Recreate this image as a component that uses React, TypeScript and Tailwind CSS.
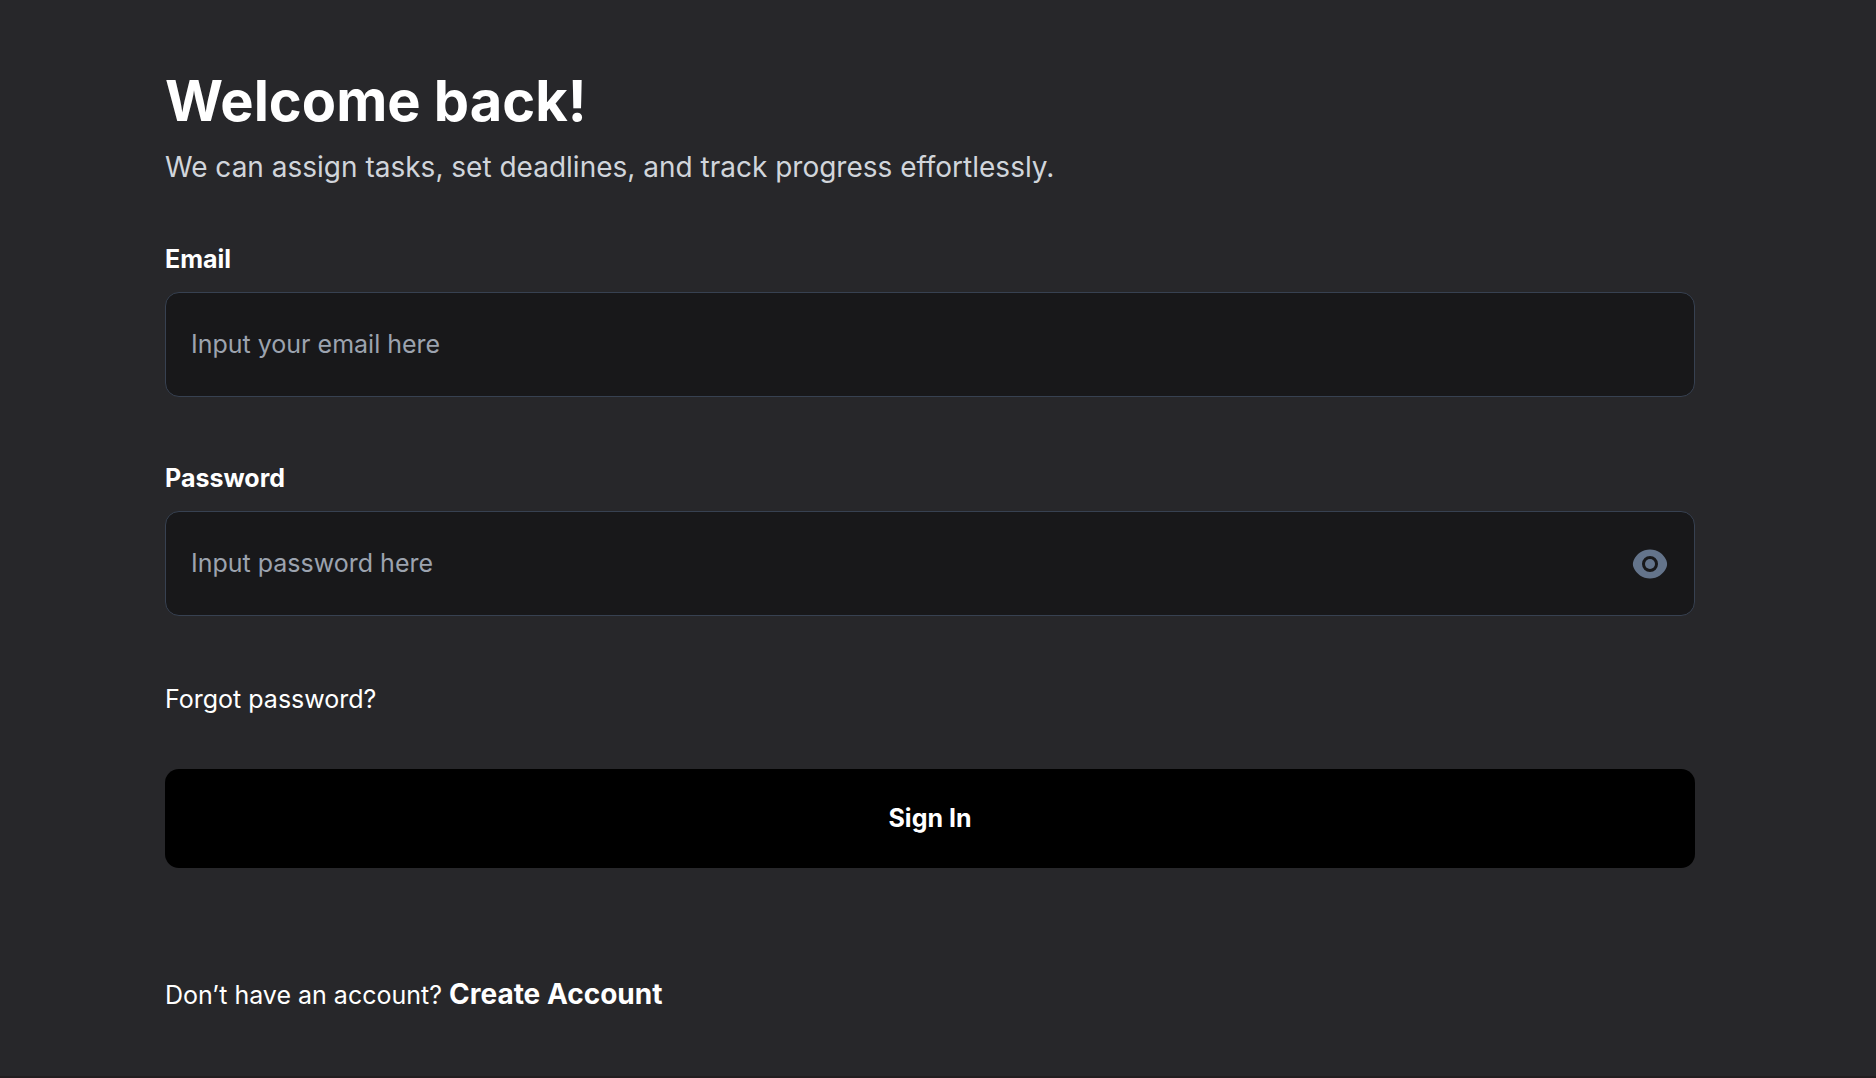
import { useState } from 'react';

type FieldProps = {
  id: string;
  label: string;
  type: string;
  placeholder: string;
  children?: React.ReactNode;
};

function Field({ id, label, type, placeholder, children }: FieldProps) {
  return (
    <div className="flex flex-col gap-[18px]">
      <label htmlFor={id} className="self-start text-[25px] leading-[30px] font-bold">
        {label}
      </label>
      <div className="flex h-[105px] items-center rounded-[14px] border border-[#374151] bg-[#18181a] pr-[26px] pl-[25px]">
        <input
          id={id}
          type={type}
          placeholder={placeholder}
          className="min-w-0 flex-1 bg-transparent text-[25px] outline-none placeholder:text-[#9ca3af]"
        />
        {children}
      </div>
    </div>
  );
}

function EyeIcon() {
  return (
    <svg viewBox="0 0 36 30" className="h-[30px] w-9" aria-hidden="true">
      <path
        fill="#64748b"
        fillRule="evenodd"
        d="M18 .5C10.500 .5 4.400 5 1.700 11.200C.6 13.700 .6 16.300 1.700 18.800C4.400 25 10.500 29.500 18 29.500C25.500 29.500 31.600 25 34.300 18.800C35.400 16.300 35.400 13.700 34.300 11.200C31.600 5 25.500 .5 18 .5ZM18 7A8 8 0 1 1 18 23A8 8 0 1 1 18 7Z"
      />
      <circle cx="18" cy="15" r="5" fill="#64748b" />
    </svg>
  );
}

export default function App() {
  const [visible, setVisible] = useState(false);

  return (
    <main className="min-h-screen border-b-2 border-[#221e20] bg-[#27272a] pt-[66px] pr-[181px] pb-10 pl-[165px] font-['Inter',sans-serif] text-white">
      <h1 className="text-[56px] leading-[70px] font-bold">Welcome back!</h1>
      <p className="mt-[13px] text-[28px] leading-9 text-[#d1d5db]">
        We can assign tasks, set deadlines, and track progress effortlessly.
      </p>
      <form className="mt-[59px] flex flex-col" onSubmit={(e) => e.preventDefault()}>
        <div className="flex flex-col gap-[66px]">
          <Field id="email" label="Email" type="email" placeholder="Input your email here" />
          <Field
            id="password"
            label="Password"
            type={visible ? 'text' : 'password'}
            placeholder="Input password here"
          >
            <button type="button" aria-label="Show password" onClick={() => setVisible(!visible)}>
              <EyeIcon />
            </button>
          </Field>
        </div>
        <a href="#forgot" className="mt-[67px] self-start text-[25px] leading-8">
          Forgot password?
        </a>
        <button
          type="submit"
          className="mt-[54px] h-[99px] rounded-[14px] bg-black text-[25px] font-bold"
        >
          Sign In
        </button>
      </form>
      <p className="mt-[108px] text-[25px] leading-9">
        Don’t have an account?{' '}
        <a href="#signup" className="text-[28px] font-bold">
          Create Account
        </a>
      </p>
    </main>
  );
}
